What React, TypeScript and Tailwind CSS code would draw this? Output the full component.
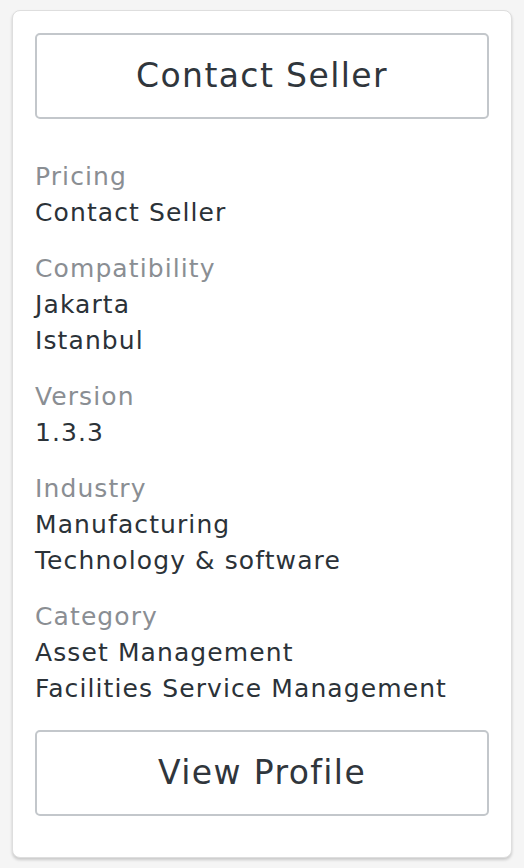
import React from "react";

const sections = [
  { label: "Pricing", values: ["Contact Seller"] },
  { label: "Compatibility", values: ["Jakarta", "Istanbul"] },
  { label: "Version", values: ["1.3.3"] },
  { label: "Industry", values: ["Manufacturing", "Technology & software"] },
  { label: "Category", values: ["Asset Management", "Facilities Service Management"] },
];

function OutlineButton({ children }: { children: React.ReactNode }) {
  return (
    <button className="w-full h-[86px] rounded-[5px] border-2 border-[#c3c7cb] bg-white text-[33px] text-[#30363c] tracking-[1.4px]">
      {children}
    </button>
  );
}

export default function App() {
  return (
    <div
      className="min-h-[868px] bg-[#f5f5f5] pt-[10px] pb-[11px] pl-[12px] pr-[12px]"
      style={{ fontFamily: '"DejaVu Sans", "Noto Sans", sans-serif' }}
    >
      <div className="rounded-[8px] border border-[#dedede] bg-white px-[22px] pt-[22px] pb-[41px] shadow-[0_2px_3px_rgba(0,0,0,0.18)]">
        <OutlineButton>Contact Seller</OutlineButton>
        <div className="mt-[40px] flex flex-col gap-[20px]">
          {sections.map((s) => (
            <div key={s.label} className="text-[25px] leading-[36px] tracking-[1.1px]">
              <div className="text-[#8a8e93]">{s.label}</div>
              {s.values.map((v) => (
                <div key={v} className="text-[#2b3238]">
                  {v}
                </div>
              ))}
            </div>
          ))}
        </div>
        <div className="mt-[23px]">
          <OutlineButton>View Profile</OutlineButton>
        </div>
      </div>
    </div>
  );
}
